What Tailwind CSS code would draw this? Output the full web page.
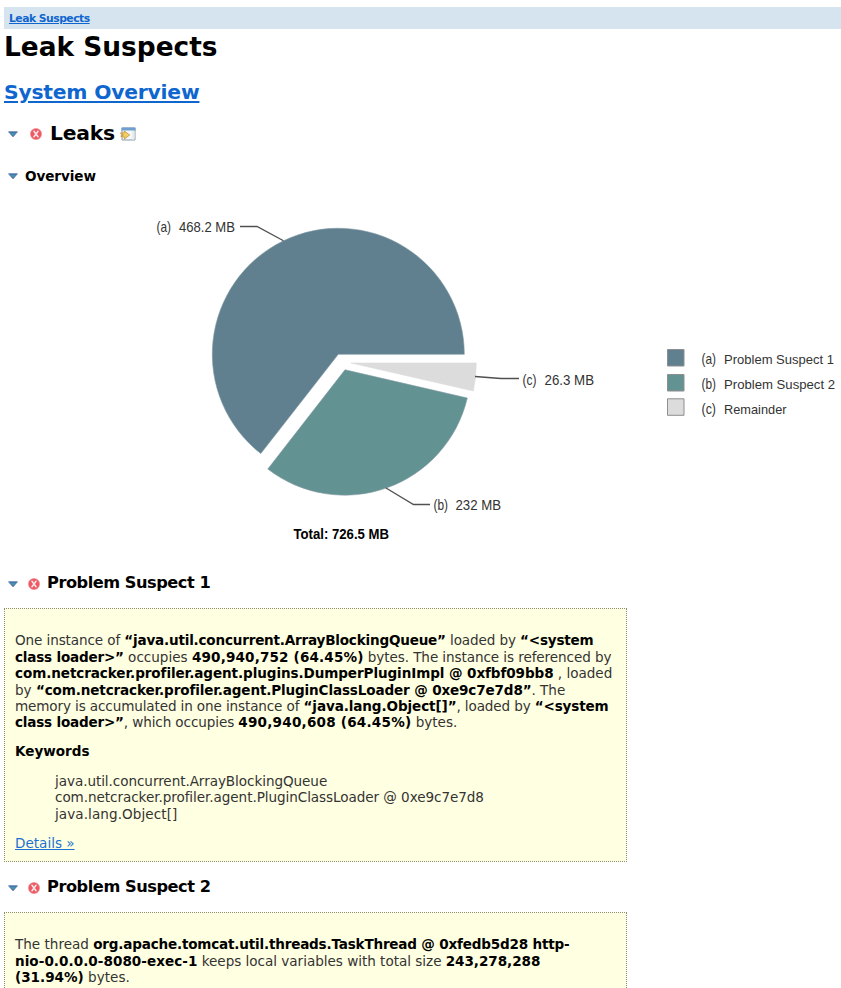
<!DOCTYPE html>
<html lang="en">
<head>
<meta charset="utf-8">
<title>Leak Suspects</title>
<script src="https://cdn.jsdelivr.net/npm/@tailwindcss/browser@4"></script>
</head>
<body class="h-[988px] overflow-hidden bg-white pl-1 pt-[7px] font-['DejaVu_Sans',sans-serif] text-black">
<svg class="hidden">
  <symbol id="arrow" viewBox="0 0 10 7"><path d="M.6 .8h8.8L5 5.8z" fill="#397da8" stroke="#5b6fae" stroke-width=".9"/><path d="M3 2.2h4L5 4.3z" fill="#43a3b0"/></symbol>
  <symbol id="error" viewBox="0 0 12 12"><circle cx="6" cy="6" r="5.6" fill="#ec5a64" stroke="#f28b92" stroke-width=".6"/><path d="M4 3.2l4 5.6M8 3.2L4 8.8" stroke="#fde8ea" stroke-width="1.5"/><path d="M3 3.2h2M7 3.2h2M3 8.8h2M7 8.8h2" stroke="#fde8ea" stroke-width=".8"/></symbol>
</svg>
<nav class="flex h-[22px] items-center bg-[#d6e4ef] pl-[5px] text-[10.8px] font-bold"><a class="mt-[2px] text-[#0f66cf] underline whitespace-nowrap tracking-[-0.52px]">Leak Suspects</a></nav>
<h1 class="mt-[2px] h-8 whitespace-nowrap text-[26.4px] leading-8 font-bold">Leak Suspects</h1>
<h2 class="mt-[15px] h-7 whitespace-nowrap text-[20.3px] leading-7 font-bold tracking-[-0.2px]"><a class="text-[#0f66cf] underline decoration-2 underline-offset-2">System Overview</a></h2>
<h2 class="mt-[13px] flex h-7 items-center whitespace-nowrap text-[20.3px] leading-7 font-bold">
  <svg class="ml-1 mt-[3px] h-[7px] w-[10px]"><use href="#arrow"/></svg>
  <svg class="ml-3 mt-[2px] h-3 w-3"><use href="#error"/></svg>
  <span class="ml-2 tracking-[-0.2px]">Leaks</span>
  <svg class="ml-[5px] mt-[2px] h-[14px] w-[16px]" viewBox="0 0 16 14"><path d="M2 1h13v12H2z" fill="#f4f7fa" stroke="#8c9aa5"/><path d="M1.5 .5h14v3h-14z" fill="#6f9fd0"/><path d="M12 4v8.5h2.5V4z" fill="#e5edf3"/><path d="M.8 5.8h3.6V4l5.3 4-5.3 4v-2.2H1V8.6h2V7H.8z" fill="#f3cd66" stroke="#c49335" stroke-width=".8"/></svg>
</h2>
<h3 class="mt-[18px] flex h-5 items-center whitespace-nowrap text-[13.6px] leading-5 font-bold">
  <svg class="ml-1 mt-[3px] h-[7px] w-[10px]"><use href="#arrow"/></svg>
  <span class="ml-[7px] mt-[2px] tracking-[-0.1px]">Overview</span>
</h3>
<svg class="-ml-1 mt-[20px] block h-[350px] w-[841px] overflow-visible font-['Liberation_Sans',Arial,sans-serif] text-[14.2px]" viewBox="0 205 841 350">
  <g stroke="#7f99a3" stroke-width=".6">
    <path d="M338.3 354.3H464.3A126 126 0 1 0 260.8 453.6Z" fill="#60808f"/>
    <path d="M345 369.8L467.3 398A126 126 0 0 1 267.8 469Z" fill="#629292"/>
    <path d="M351 363H476.3A126 126 0 0 1 473.3 391Z" fill="#dcdcdc" stroke="#dcdcdc"/>
  </g>
  <g fill="none" stroke="#505050" stroke-width="1.3">
    <path d="M240 226.5H257L283.5 240.8"/>
    <path d="M386 488L413.5 504.5H430"/>
    <path d="M475 376.5L501 378.5H519"/>
  </g>
  <g fill="#333">
    <text x="156.5" y="232" textLength="14.5" lengthAdjust="spacingAndGlyphs">(a)</text><text x="179" y="232" textLength="56" lengthAdjust="spacingAndGlyphs">468.2 MB</text>
    <text x="522.5" y="385" textLength="14" lengthAdjust="spacingAndGlyphs">(c)</text><text x="544.5" y="385" textLength="49.5" lengthAdjust="spacingAndGlyphs">26.3 MB</text>
    <text x="433.5" y="510" textLength="14.5" lengthAdjust="spacingAndGlyphs">(b)</text><text x="455.5" y="510" textLength="45.5" lengthAdjust="spacingAndGlyphs">232 MB</text>
    <text x="701.5" y="364" textLength="14.5" lengthAdjust="spacingAndGlyphs">(a)</text>
    <text x="701.5" y="389" textLength="14.5" lengthAdjust="spacingAndGlyphs">(b)</text>
    <text x="701.5" y="414" textLength="14.5" lengthAdjust="spacingAndGlyphs">(c)</text>
    <g class="text-[13.6px]">
      <text x="724" y="364" textLength="110" lengthAdjust="spacingAndGlyphs">Problem Suspect 1</text>
      <text x="724" y="389" textLength="111" lengthAdjust="spacingAndGlyphs">Problem Suspect 2</text>
      <text x="724" y="414" textLength="62.5" lengthAdjust="spacingAndGlyphs">Remainder</text>
    </g>
  </g>
  <text x="293.5" y="539" textLength="95.5" lengthAdjust="spacingAndGlyphs" font-weight="bold">Total: 726.5 MB</text>
  <g stroke="#8e8e8e">
    <path d="M667.5 349.5h16.5v16.5h-16.5z" fill="#60808f"/>
    <path d="M667.5 374.5h16.5v16.5h-16.5z" fill="#629292"/>
    <path d="M667.5 398.8h16.5v16.5h-16.5z" fill="#dcdcdc"/>
  </g>
</svg>
<h3 class="mt-[16px] flex h-6 items-center whitespace-nowrap text-[16.2px] leading-6 font-bold">
  <svg class="ml-1 mt-[3px] h-[7px] w-[10px]"><use href="#arrow"/></svg>
  <svg class="ml-[10px] mt-[2px] h-3 w-3"><use href="#error"/></svg>
  <span class="ml-[7px] tracking-[-0.47px]">Problem Suspect 1</span>
</h3>
<section class="mt-[13px] h-[254px] w-[623px] whitespace-nowrap border border-dotted border-[#8c8c78] bg-[#ffffe1] pl-[10px] pt-[23.4px] text-[13.55px] leading-[16.4px] text-[#333] [&_b]:text-black">
  <p>
    <span class="block tracking-[-0.1px]">One instance of <b class="tracking-[-0.2px]">“java.util.concurrent.ArrayBlockingQueue”</b> loaded by <b class="tracking-[-0.2px]">“&lt;system</b></span>
    <span class="block"><b class="tracking-[-0.2px]">class loader&gt;”</b> occupies <b class="tracking-[0.15px]">490,940,752 (64.45%)</b><span class="tracking-[-0.08px]"> bytes. The instance is referenced by</span></span>
    <span class="block"><b class="tracking-[-0.09px]">com.netcracker.profiler.agent.plugins.DumperPluginImpl @ 0xfbf09bb8</b> , loaded</span>
    <span class="block">by <b class="tracking-[-0.14px]">“com.netcracker.profiler.agent.PluginClassLoader @ 0xe9c7e7d8”</b>. The</span>
    <span class="block tracking-[-0.12px]">memory is accumulated in one instance of <b class="tracking-[-0.1px]">“java.lang.Object[]”</b>, loaded by <b class="tracking-[-0.15px]">“&lt;system</b></span>
    <span class="block"><b class="tracking-[-0.2px]">class loader&gt;”</b><span class="tracking-[-0.1px]">, which occupies </span><b class="tracking-[0.22px]">490,940,608 (64.45%)</b> bytes.</span>
  </p>
  <p class="mt-[12.5px]"><b>Keywords</b></p>
  <ul class="mt-[13px] pl-10">
    <li class="tracking-[-0.06px]">java.util.concurrent.ArrayBlockingQueue</li>
    <li class="tracking-[-0.06px]">com.netcracker.profiler.agent.PluginClassLoader @ 0xe9c7e7d8</li>
    <li class="tracking-[0.08px]">java.lang.Object[]</li>
  </ul>
  <p class="mt-[12.6px]"><a class="text-[#1c72d2] underline">Details »</a></p>
</section>
<h3 class="mt-[13px] flex h-6 items-center whitespace-nowrap text-[16.2px] leading-6 font-bold">
  <svg class="ml-1 mt-[3px] h-[7px] w-[10px]"><use href="#arrow"/></svg>
  <svg class="ml-[10px] mt-[2px] h-3 w-3"><use href="#error"/></svg>
  <span class="ml-[7px] tracking-[-0.45px]">Problem Suspect 2</span>
</h3>
<section class="mt-[13px] h-[120px] w-[623px] whitespace-nowrap border border-dotted border-[#8c8c78] bg-[#ffffe1] pl-[10px] pt-[23.4px] text-[13.55px] leading-[16.4px] text-[#333] [&_b]:text-black">
  <p>
    <span class="block">The thread <b class="tracking-[-0.19px]">org.apache.tomcat.util.threads.TaskThread @ 0xfedb5d28 http-</b></span>
    <span class="block"><b class="tracking-[0.04px]">nio-0.0.0.0-8080-exec-1</b><span class="tracking-[-0.02px]"> keeps local variables with total size </span><b class="tracking-[-0.05px]">243,278,288</b></span>
    <span class="block"><b>(31.94%)</b> bytes.</span>
  </p>
</section>
</body>
</html>
